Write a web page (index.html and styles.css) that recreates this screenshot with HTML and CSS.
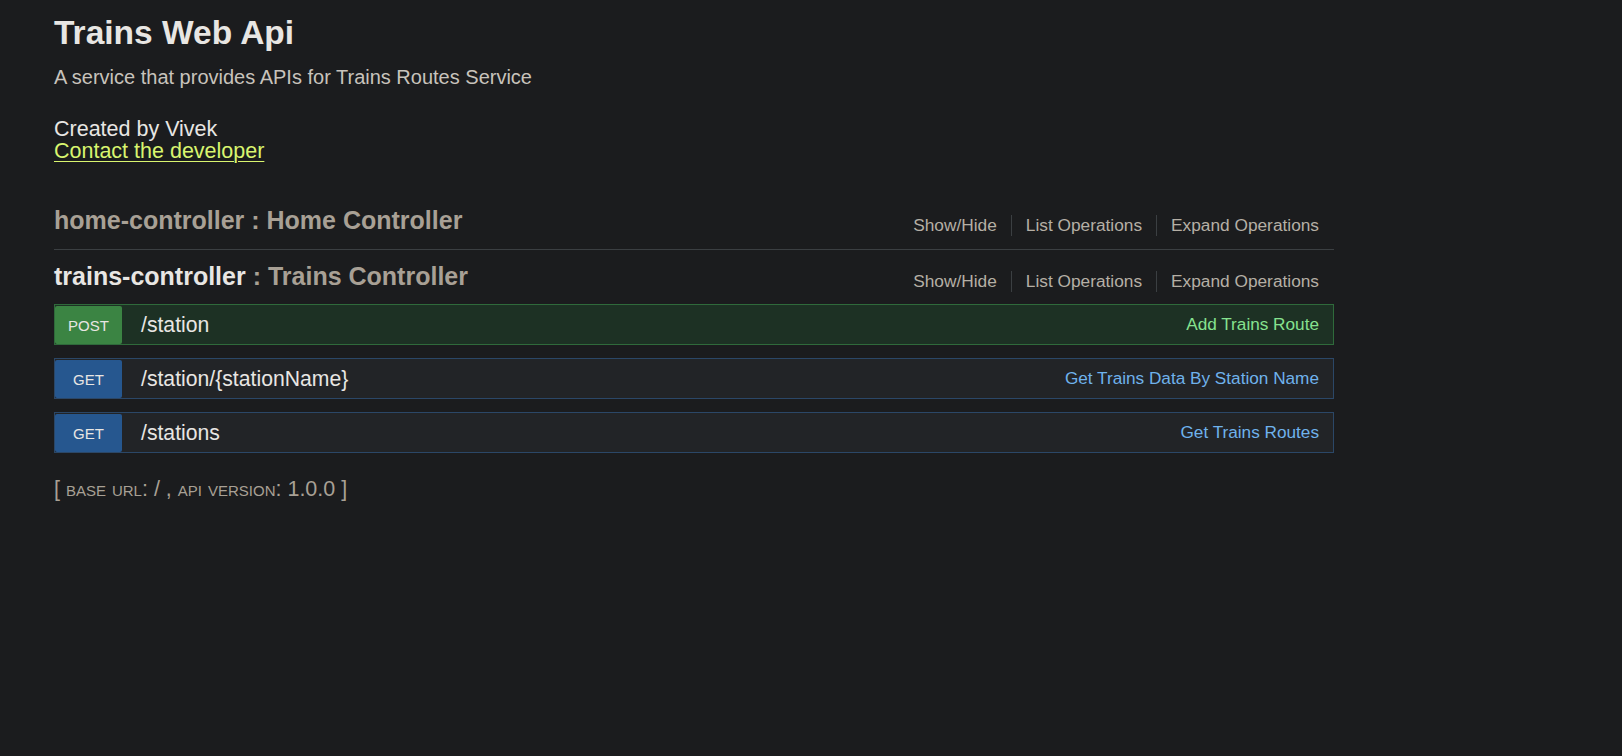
FILE: index.html
```html
<!DOCTYPE html>
<html lang="en">
<head>
<meta charset="utf-8">
<title>Swagger UI</title>
<link rel="stylesheet" href="styles.css">
</head>
<body>
<div class="container">
  <div class="info">
    <h1 class="info-title">Trains Web Api</h1>
    <div class="info-desc">A service that provides APIs for Trains Routes Service</div>
    <div class="info-contact">
      <div class="created">Created by Vivek</div>
      <a class="contact-link" href="#">Contact the developer</a>
    </div>
  </div>

  <ul class="resources">
    <li class="resource collapsed">
      <div class="heading">
        <h2 class="res-title"><span class="res-name dim">home-controller</span><span class="dim"> : Home Controller</span></h2>
        <ul class="options">
          <li><a href="#">Show/Hide</a></li>
          <li><a href="#">List Operations</a></li>
          <li><a href="#">Expand Operations</a></li>
        </ul>
      </div>
    </li>
    <li class="resource expanded">
      <div class="heading">
        <h2 class="res-title"><span class="res-name">trains-controller</span><span class="dim"> : Trains Controller</span></h2>
        <ul class="options">
          <li><a href="#">Show/Hide</a></li>
          <li><a href="#">List Operations</a></li>
          <li><a href="#">Expand Operations</a></li>
        </ul>
      </div>
      <ul class="operations">
        <li class="op post">
          <span class="method">POST</span>
          <span class="path">/station</span>
          <span class="summary">Add Trains Route</span>
        </li>
        <li class="op get">
          <span class="method">GET</span>
          <span class="path">/station/{stationName}</span>
          <span class="summary">Get Trains Data By Station Name</span>
        </li>
        <li class="op get">
          <span class="method">GET</span>
          <span class="path">/stations</span>
          <span class="summary">Get Trains Routes</span>
        </li>
      </ul>
    </li>
  </ul>

  <div class="footer">[ <span class="sc">base url</span>: / , <span class="sc">api version</span>: 1.0.0 ]</div>
</div>
</body>
</html>
```

FILE: styles.css
```css
* { box-sizing: border-box; }
html, body {
  margin: 0;
  padding: 0;
  background: #1b1c1e;
}
body {
  font-family: "Liberation Sans", Arial, Helvetica, sans-serif;
  color: #e8e6e3;
  min-height: 756px;
}
.container {
  width: 1280px;
  margin-left: 54px;
}
.info-title {
  margin: 13px 0 0;
  font-size: 33.5px;
  line-height: 40px;
  font-weight: bold;
  color: #e8e6e3;
}
.info-desc {
  margin-top: 12px;
  font-size: 20px;
  line-height: 24px;
  color: #c8c3bc;
}
.info-contact {
  margin-top: 29px;
  font-size: 21.5px;
  line-height: 22px;
}
.created { color: #e8e6e3; }
.contact-link {
  color: #d9f56f;
  text-decoration: underline;
  text-underline-offset: 3px;
  text-decoration-thickness: 1px;
}
.resources {
  list-style: none;
  margin: 31px 0 0;
  padding: 0;
}
.resource { padding-top: 12px; }
.resource.expanded { padding-top: 11px; }
.heading {
  display: flex;
  justify-content: space-between;
  align-items: flex-start;
}
.collapsed .heading {
  padding-bottom: 13px;
  border-bottom: 1px solid #3b3f42;
}
.expanded .heading { padding-bottom: 12px; }
.res-title {
  margin: 0;
  font-size: 25px;
  line-height: 30px;
  font-weight: bold;
  color: #e8e6e3;
  white-space: nowrap;
}
.dim { color: #a8a095; }
.options {
  list-style: none;
  display: flex;
  margin: 10px 0 0;
  padding: 0 15px 0 0;
}
.options li {
  padding: 0 14px;
  border-left: 1px solid #3b3f42;
  font-size: 17.3px;
  line-height: 21px;
}
.options li:first-child { border-left: none; }
.options li:last-child { padding-right: 0; }
.options a {
  color: #b5afa5;
  text-decoration: none;
}
.operations {
  list-style: none;
  margin: 0;
  padding: 0;
}
.op {
  display: flex;
  align-items: center;
  height: 41px;
  margin-bottom: 13px;
  border: 1px solid;
  padding-right: 14px;
}
.op.post {
  background: #1d3124;
  border-color: #2f6a3b;
}
.op.get {
  background: #222427;
  border-color: #2b4767;
}
.method {
  width: 67px;
  height: 38px;
  margin-top: 1px;
  align-self: flex-start;
  display: flex;
  align-items: center;
  justify-content: center;
  border-radius: 2px;
  font-size: 15px;
  color: #e8e6e3;
  padding-top: 1px;
}
.post .method { background: #3b8443; }
.get .method { background: #26578f; }
.path {
  margin-left: 19px;
  font-size: 21.2px;
  color: #e8e6e3;
  flex: 1;
}
.summary {
  font-size: 17.2px;
}
.post .summary { color: #86e28f; }
.get .summary { color: #6fb2ec; }
.footer {
  margin-top: 24px;
  font-size: 21.5px;
  line-height: 24px;
  color: #a8a095;
}
.sc { font-variant: small-caps; }
```
